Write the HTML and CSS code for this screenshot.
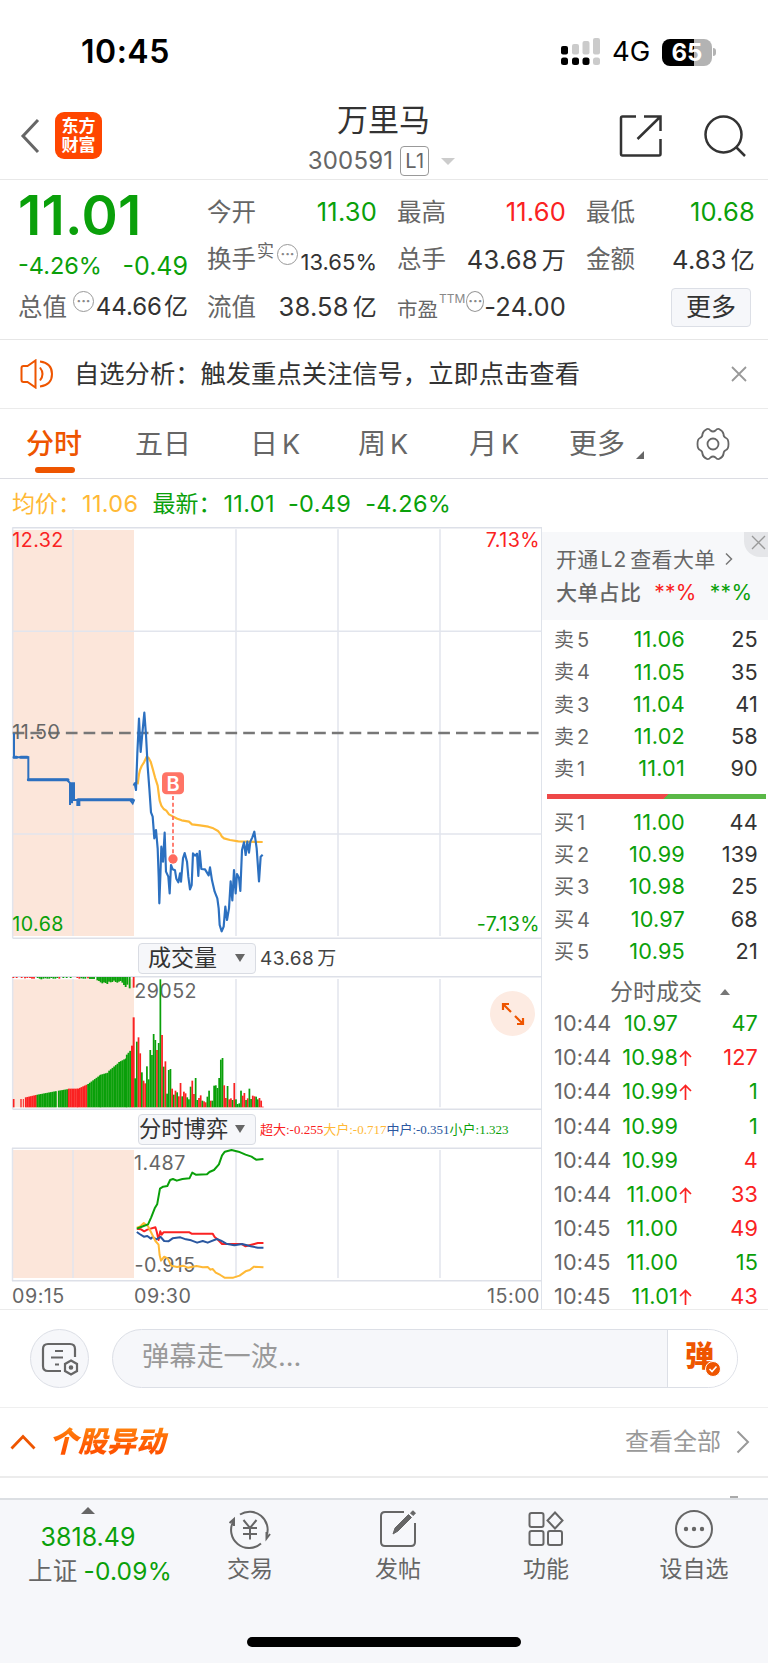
FILE: index.html
```html
<!DOCTYPE html>
<html lang="zh-CN">
<head>
    <meta charset="UTF-8">
    <meta name="viewport" content="width=device-width, initial-scale=1.0">
    <title>万里马 300591</title>
    <link rel="stylesheet" href="styles.css">
</head>
<body>
    <div class="status-bar">
        <span class="status-time">10:45</span>
        <div class="status-right">
            <svg class="signal" viewBox="0 0 40 28">
                <rect x="0" y="8" width="7" height="8.500" rx="2"/>
                <rect x="0" y="19.500" width="7" height="7.500" rx="2.500"/>
                <rect x="11" y="19.500" width="7" height="7.500" rx="2.500"/>
                <rect x="21.500" y="19.500" width="7" height="7.500" rx="2.500"/>
                <g fill="#cbcbcb">
                    <rect x="11" y="6" width="7" height="10.500" rx="2"/>
                    <rect x="21.500" y="3" width="7" height="13.500" rx="2"/>
                    <rect x="32" y="0" width="7" height="16.500" rx="2"/>
                    <rect x="32" y="19.500" width="7" height="7.500" rx="2.500"/>
                </g>
            </svg>
            <span class="network">4G</span>
            <span class="battery">65</span>
            <span class="battery-cap"></span>
        </div>
    </div>

    <header class="header">
        <div class="header-side">
            <svg class="back" viewBox="0 0 20 36"><path d="M18 2L3 18L18 34"/></svg>
            <div class="logo"><span>东方</span><span>财富</span></div>
        </div>
        <div class="header-title">
            <h1>万里马</h1>
            <div class="code"><span>300591</span><span class="level">L1</span><i class="tri-down"></i></div>
        </div>
        <div class="header-side header-actions">
            <svg width="44" height="44" viewBox="0 0 44 44"><path d="M17 2.500H3.500q-1.500 0-1.500 1.500V40q0 1.500 1.500 1.500H40q1.500 0 1.500-1.500V25M25 2.500H41.500V17M41 3L18.500 25"/></svg>
            <svg width="44" height="44" viewBox="0 0 44 44"><circle cx="20.500" cy="20.500" r="18"/><path d="M33 33L42 42"/></svg>
        </div>
    </header>

    <section class="quote">
        <div class="quote-main">
            <div class="price green">11.01</div>
            <div class="change green"><span>-4.26%</span><span class="change-abs">-0.49</span></div>
            <div class="cell"><span class="label">总值</span><span class="dots raised">···</span><b class="val mktcap">44.66<em>亿</em></b></div>
        </div>
        <div class="quote-grid">
            <div class="cell"><span class="label">今开</span><b class="val green">11.30</b></div>
            <div class="cell"><span class="label">最高</span><b class="val red">11.60</b></div>
            <div class="cell"><span class="label">最低</span><b class="val green">10.68</b></div>
            <div class="cell"><span class="label">换手</span><span class="sup">实</span><span class="dots raised">···</span><b class="val small">13.65%</b></div>
            <div class="cell"><span class="label">总手</span><b class="val">43.68<em>万</em></b></div>
            <div class="cell"><span class="label">金额</span><b class="val">4.83<em>亿</em></b></div>
            <div class="cell"><span class="label">流值</span><b class="val">38.58<em>亿</em></b></div>
            <div class="cell"><span class="label narrow">市盈</span><span class="sup ttm">TTM</span><span class="dots raised">···</span><b class="val">-24.00</b></div>
            <div class="cell"><button class="more-btn">更多</button></div>
        </div>
    </section>

    <section class="notice">
        <svg class="speaker" viewBox="0 0 34 30"><path d="M1.500 9q0-2 2-2H7.500L15.500 1.500V28.500L7.500 23H3.500q-2 0-2-2ZM20 8.500Q25 15 20 21.500M20 2.500Q32 4 32 15T20 27.500"/></svg>
        <span class="notice-text">自选分析：触发重点关注信号，立即点击查看</span>
        <svg class="notice-close" viewBox="0 0 16 16"><path d="M1 1L15 15M15 1L1 15"/></svg>
    </section>

    <nav class="tabs">
        <span class="tab active">分时</span>
        <span class="tab">五日</span>
        <span class="tab">日<u>K</u></span>
        <span class="tab">周<u>K</u></span>
        <span class="tab">月<u>K</u></span>
        <span class="tab">更多<i class="tri-corner"></i></span>
        <svg class="gear" viewBox="0 0 34 34"><path d="M11 2Q13 1.500 14.500 3.500Q17 5.500 19.500 3.500Q21 1.500 23 2Q27 4 27.500 7Q27.500 10 30 11Q32.500 12 32.500 17Q32.500 22 30 23Q27.500 24 27.500 27Q27 30 23 32Q21 32.500 19.500 30.500Q17 28.500 14.500 30.500Q13 32.500 11 32Q7 30 6.500 27Q6.500 24 4 23Q1.500 22 1.500 17Q1.500 12 4 11Q6.500 10 6.500 7Q7 4 11 2Z"/><circle cx="17" cy="17" r="5.500"/></svg>
    </nav>

    <div class="ticker">
        <span class="yellow">均价：</span><span class="yellow n1">11.06</span>
        <span class="green n2">最新：</span><span class="green n3">11.01</span>
        <span class="green n4">-0.49</span><span class="green n5">-4.26%</span>
    </div>

    <main class="board">
        <div class="charts">
            <!-- price chart, three units to the pixel -->
            <svg class="chart price-chart" viewBox="0 21 1626 1236">
                <rect class="auction" x="38" y="30" width="364" height="1218"/>
                <path class="grid" d="M38 22V1255M219 28V1248M708 28V1248M1014 28V1248M1320 28V1248M38 334H1625M38 942H1625"/>
                <path class="frame" d="M38 23H1625M38 1255H1625"/>
                <path class="prev-close" d="M38 639H1618"/>
                <text x="37" y="81" fill="#fa2222">12.32</text>
                <text x="37" y="657" fill="#666">11.50</text>
                <text x="37" y="1233" fill="#0aa00a">10.68</text>
                <text x="1620" y="81" text-anchor="end" fill="#fa2222">7.13%</text>
                <text x="1620" y="1233" text-anchor="end" fill="#0aa00a">-7.13%</text>
                <path class="blue auction-line" d="M42 640V712H85V779H200L210 789V855M220 788V838M216 790V850M210 790H222V840H398M232 840V855H238V842M390 840L398 850L403 838"/>
                <path class="blue auction-dots" d="M42 712H50M62 712H82M85 779H204M234 839H398"/>
                <g transform="translate(360 510)" class="lines">
                    <path stroke="#ffb936" d="M53 283L57 253L60 240L65 228L72 217L80 200L86 204L92 215L98 236L105 262L113 287L116 310L119 332L124 347L131 357L139 362L147 373L160 380L172 386L185 391L207 395L216 403L240 406L265 410L280 415L294 423L300 430L305 439L312 445L330 450L355 454L380 455L428 456"/>
                    <path class="blue" d="M41 287L44 280L48 300L52 190L57 86L62 186L67 130L73 68L78 135L83 230L88 295L93 367L98 380L103 445L108 420L113 475L116 560L118 640L121 560L124 470L129 515L134 428L138 545L145 560L149 610L153 525L158 538L165 541L169 566L175 577L180 550L183 575L189 505L194 489L201 515L205 560L210 598L215 585L219 490L225 497L231 491L235 558L239 483L244 537L255 538L266 556L270 532L276 571L284 605L292 625L296 655L299 705L305 724L311 710L316 650L321 690L327 655L332 574L337 631L342 540L347 610L351 552L357 564L361 603L366 480L372 457L377 495L382 455L387 488L391 455L397 442L403 425L410 475L417 574L422 500L428 494"/>
                </g>
                <path class="mark-line" d="M519 828V1010"/>
                <circle cx="519" cy="1017" r="14" fill="#ff6b5e"/>
                <rect x="486" y="757" width="66" height="66" rx="13" fill="#ff7466"/>
                <text class="mark-text" x="519" y="812" text-anchor="middle">B</text>
            </svg>

            <div class="chart-head"><button class="select">成交量<i></i></button><span class="amount">43.68<em>万</em></span></div>

            <div class="volume-wrap">
                <svg class="chart volume-chart" viewBox="0 123 1626 402">
                    <rect class="auction" x="38" y="133" width="364" height="384"/>
                    <path class="grid" d="M38 125V523M219 132V517M708 132V517M1014 132V517M1320 132V517"/>
                    <path class="frame" d="M38 125H1625M38 523H1625"/>
                    <text x="403" y="190" fill="#666">29052</text>
                    <g id="volumeBars"></g>
                </svg>
                <button class="expand"><svg width="24" height="24" viewBox="0 0 24 24"><path d="M10 10L2 2M2 8V2H8M14 14L22 22M22 16V22H16"/></svg></button>
            </div>

            <div class="chart-head"><button class="select tight">分时博弈<i></i></button><span class="legend"><span class="c-red">超大:-0.255</span><span class="yellow">大户:-0.717</span><span class="c-blue">中户:-0.351</span><span class="green">小户:1.323</span></span></div>

            <svg class="chart flow-chart" viewBox="0 1147 542 135">
                <rect class="auction" x="12.500" y="1150" width="121.500" height="128"/>
                <g class="thin">
                    <path class="grid" d="M12.500 1148V1281M73 1150V1278M236 1150V1278M338 1150V1278M440 1150V1278"/>
                    <path class="frame" d="M12 1148.200H541.500M12 1280.800H541.500"/>
                </g>
                <text class="px" x="134" y="1169.500" fill="#666">1.487</text>
                <text class="px" x="134.500" y="1271.500" fill="#666">-0.915</text>
                <g class="flow" transform="translate(0 1110) scale(.3508 .3333)">
                    <path stroke="#fa2222" d="M390 356L402 358L411 364L420 359L443 352L447 366L452 390L457 364L461 374L466 367H540L546 371H606L612 381L620 388L633 402H688L700 409L725 402L735 399H751"/>
                    <path stroke="#2a57a0" d="M390 366L398 372L410 380L420 378L430 386L435 381L446 388L458 381L468 393L480 394L492 385L514 382L530 388L545 391L562 398L578 393L592 398L618 387L630 392L645 401L668 406L690 402L715 409L735 413H751"/>
                    <path stroke="#ffb936" d="M390 353L400 349L410 339L422 349L432 370L443 393L452 404L455 435L459 452L468 440L478 445L488 467L505 471L522 467L535 473L560 468L578 472L592 471L600 479L606 477L615 488L628 495L640 503H665L683 497L700 484L712 480L724 470L751 472"/>
                    <path stroke="#0aa00a" d="M390 356L402 351L422 343L431 322L441 295L448 283L456 236L465 230L477 228L485 210L493 207L504 212L520 207L540 205L548 188L558 194L590 193L597 186L610 180L624 163L633 136L641 125L660 120L680 125L700 134L717 140L730 149L751 147"/>
                </g>
            </svg>
            <div class="axis"><span>09:15</span><span class="axis-open">09:30</span><span class="axis-close">15:00</span></div>
        </div>

        <aside class="side">
            <div class="promo">
                <svg class="promo-close" viewBox="0 0 24 25"><path d="M8 4L21 17M21 4L8 17"/></svg>
                <div class="promo-link">开通<u>L2</u>查看大单<svg width="8" height="14" viewBox="0 0 8 14"><path d="M1 1.500L6.500 7L1 12.500"/></svg></div>
                <div class="promo-ratio">大单占比<span class="red">**%</span><span class="green">**%</span></div>
            </div>
            <div class="book">
                <div class="order"><span>卖5</span><b>11.06</b><em>25</em></div>
                <div class="order"><span>卖4</span><b>11.05</b><em>35</em></div>
                <div class="order"><span>卖3</span><b>11.04</b><em>41</em></div>
                <div class="order"><span>卖2</span><b>11.02</b><em>58</em></div>
                <div class="order"><span>卖1</span><b>11.01</b><em>90</em></div>
            </div>
            <div class="ratio-bar"></div>
            <div class="book">
                <div class="order"><span>买1</span><b>11.00</b><em>44</em></div>
                <div class="order"><span>买2</span><b>10.99</b><em>139</em></div>
                <div class="order"><span>买3</span><b>10.98</b><em>25</em></div>
                <div class="order"><span>买4</span><b>10.97</b><em>68</em></div>
                <div class="order"><span>买5</span><b>10.95</b><em>21</em></div>
            </div>
            <div class="deals-title">分时成交<i></i></div>
            <div class="deals">
                <div class="deal"><span>10:44</span><b>10.97</b><em class="green">47</em></div>
                <div class="deal"><span>10:44</span><b>10.98</b><svg class="up" viewBox="0 0 13 16"><path d="M6.500 16V1.500M1 7L6.500 1.500L12 7"/></svg><em class="red">127</em></div>
                <div class="deal"><span>10:44</span><b>10.99</b><svg class="up" viewBox="0 0 13 16"><path d="M6.500 16V1.500M1 7L6.500 1.500L12 7"/></svg><em class="green">1</em></div>
                <div class="deal"><span>10:44</span><b>10.99</b><em class="green">1</em></div>
                <div class="deal"><span>10:44</span><b>10.99</b><em class="red">4</em></div>
                <div class="deal"><span>10:44</span><b>11.00</b><svg class="up" viewBox="0 0 13 16"><path d="M6.500 16V1.500M1 7L6.500 1.500L12 7"/></svg><em class="red">33</em></div>
                <div class="deal"><span>10:45</span><b>11.00</b><em class="red">49</em></div>
                <div class="deal"><span>10:45</span><b>11.00</b><em class="green">15</em></div>
                <div class="deal"><span>10:45</span><b>11.01</b><svg class="up" viewBox="0 0 13 16"><path d="M6.500 16V1.500M1 7L6.500 1.500L12 7"/></svg><em class="red">43</em></div>
            </div>
        </aside>
    </main>

    <section class="comment">
        <button class="comment-set"><svg width="38" height="34" viewBox="0 0 38 34"><path d="M20 29H7q-5 0-5-5V7q0-5 5-5H29q5 0 5 5V15M14 9H22M10 15.500H22M14 22.500H18M30 18.500L36 22V29L30 32.500L24 29V22Z"/><circle cx="30" cy="25.500" r="1.200"/></svg></button>
        <div class="comment-box">
            <span class="placeholder">弹幕走一波...</span>
            <div class="danmu">弹<svg width="16" height="16" viewBox="0 0 16 16"><circle cx="8" cy="8" r="7.500" fill="#ee5500" stroke="#fff" stroke-width="1"/><path d="M4.500 8L7 10.500L11.500 5.500" fill="none" stroke="#fff" stroke-width="1.600"/></svg></div>
        </div>
    </section>

    <section class="moves">
        <svg class="moves-arrow" viewBox="0 0 26 16"><path d="M1.500 14.500L13 2.500L24.500 14.500"/></svg>
        <h2>个股异动</h2>
        <span class="view-all">查看全部</span>
        <svg class="moves-more" viewBox="0 0 14 24"><path d="M1.500 1.500L12 12L1.500 22.500"/></svg>
    </section>
    <div class="peek"><i></i></div>

    <footer class="bottom-nav">
        <div class="index">
            <i class="tri-up"></i>
            <span class="green index-val">3818.49</span>
            <span class="index-row">上证<span class="green">-0.09%</span></span>
        </div>
        <div class="nav-item">
            <svg viewBox="0 0 44 40"><path d="M12 5.500A18 18 0 0 1 38.500 27M42 25L38.500 29.500V23M33 34.500A18 18 0 0 1 5.500 12M1.500 14L6 10V17M15.500 11L22 19L28.500 11M22 19V30.500M15 19H29M15 25H29"/></svg>
            <span>交易</span>
        </div>
        <div class="nav-item">
            <svg viewBox="0 0 44 40"><path d="M28 3H9q-4 0-4 4V33q0 4 4 4H35q4 0 4-4V14"/><path d="M17 25L19 19L32.500 5.500L35.500 8.500L22 22ZM34.500 4L37 1.800L39.500 4.200L37 6.500Z" fill="#666" stroke-width="1"/></svg>
            <span>发帖</span>
        </div>
        <div class="nav-item">
            <svg viewBox="0 0 44 40"><rect x="5.500" y="4" width="14" height="14" rx="2"/><rect x="5.500" y="22" width="14" height="14" rx="2"/><rect x="24" y="22" width="14" height="14" rx="2"/><path d="M31 3.500L38.500 11.500L31 19.500L23.500 11.500Z"/></svg>
            <span>功能</span>
        </div>
        <div class="nav-item">
            <svg viewBox="0 0 44 40"><circle cx="22" cy="20" r="18"/><g fill="#666" stroke="none"><circle cx="14" cy="20" r="2.200"/><circle cx="22" cy="20" r="2.200"/><circle cx="30" cy="20" r="2.200"/></g></svg>
            <span>设自选</span>
        </div>
        <div class="home-indicator"></div>
    </footer>

    <script src="chart.js"></script>
</body>
</html>
```
FILE: styles.css
```css
* {
    margin: 0;
    padding: 0;
    box-sizing: border-box;
}

body {
    width: 768px;
    height: 1663px;
    overflow: hidden;
    background: #fff;
    color: #333;
    font-family: Inter, 'Noto Sans CJK SC', sans-serif;
    font-size: 24px;
    line-height: 1;
}

b, em, i, u {
    font-weight: 400;
    font-style: normal;
    text-decoration: none;
}

button {
    font: inherit;
    color: inherit;
    border: 0;
    background: none;
}

svg {
    display: block;
    flex: none;
    fill: none;
}

.green { color: #0aa00a; }
.red { color: #fa2222; }
.yellow { color: #ffb936; }

/* status bar */
.status-bar {
    height: 104px;
    padding: 0 52px 0 81px;
    display: flex;
    justify-content: space-between;
    align-items: center;
    color: #000;
}

.status-time {
    font-size: 32px;
    font-weight: 600;
    letter-spacing: 0.500px;
}

.status-right {
    display: flex;
    align-items: center;
}

.signal {
    width: 40px;
    height: 28px;
    fill: #000;
}

.network {
    margin-left: 11px;
    width: 50px;
    font-size: 27.500px;
}

.battery {
    width: 50px;
    height: 27px;
    border-radius: 8px;
    background: linear-gradient(90deg, #000 65%, #b3b3b3 65%);
    color: #fff;
    font-size: 24px;
    font-weight: 700;
    line-height: 27px;
    text-align: center;
}

.battery-cap {
    width: 3px;
    height: 8px;
    margin-left: 1px;
    border-radius: 0 3px 3px 0;
    background: #b3b3b3;
}

/* header */
.header {
    height: 76px;
    padding: 0 21px 0 20px;
    display: flex;
    border-bottom: 1px solid #e8e8e8;
}

.header-side {
    width: 127px;
    height: 63px;
    display: flex;
    align-items: center;
}

.back {
    width: 20px;
    height: 36px;
    stroke: #666;
    stroke-width: 3;
}

.logo {
    width: 47px;
    height: 47px;
    margin-left: 15px;
    border-radius: 9px;
    background: #ff4600;
    color: #fff;
    font-size: 17px;
    font-weight: 700;
    line-height: 19px;
    display: flex;
    flex-direction: column;
    align-items: center;
    justify-content: center;
}

.header-title {
    flex: 1;
    display: flex;
    flex-direction: column;
    align-items: center;
}

h1 {
    margin-top: -1px;
    font-size: 31px;
    font-weight: 400;
    line-height: 34px;
}

.code {
    height: 30px;
    margin: 9px 4px 0 0;
    display: flex;
    align-items: center;
    font-size: 24px;
    letter-spacing: 0.200px;
    color: #666;
}

.level {
    width: 29px;
    height: 30px;
    margin-left: 7px;
    border: 1.500px solid #999;
    border-radius: 4px;
    font-size: 20px;
    line-height: 28px;
    text-align: center;
}

.tri-down {
    margin-left: 12px;
    border: 7px solid transparent;
    border-top-color: #ccc;
    border-bottom: 0;
}

.header-actions {
    justify-content: flex-end;
    gap: 40px;
    stroke: #333;
    stroke-width: 2.500;
}

/* quote */
.quote {
    height: 160px;
    display: flex;
    border-bottom: 1px solid #e6e6e6;
}

.quote-main {
    width: 188px;
    padding-left: 18px;
}

.price {
    height: 57px;
    padding-top: 8px;
    font-size: 55px;
    font-weight: 600;
    line-height: 55px;
    letter-spacing: 0.300px;
}

.change {
    height: 46px;
    display: flex;
    align-items: center;
    justify-content: space-between;
    padding-top: 12px;
    font-size: 23.500px;
}

.change-abs {
    font-size: 25px;
}

.quote-main .cell {
    height: 48px;
}

.quote-grid {
    padding: 8px 0 0 19px;
    display: grid;
    grid-template-columns: 170px 169px 169px;
    grid-template-rows: 48px 47px 48px;
    column-gap: 20px;
}

.cell {
    display: flex;
    align-items: center;
}

.label {
    color: #666;
    font-size: 24.500px;
    white-space: nowrap;
}

.narrow {
    font-size: 20.500px;
    padding-top: 6px;
}

.sup {
    color: #666;
    font-size: 17px;
    margin: -16px 3px 0 1px;
}

.ttm {
    font-size: 12px;
    margin-right: 1px;
    color: #888;
}

.dots {
    width: 21px;
    height: 21px;
    border: 1.800px solid #999;
    border-radius: 50%;
    color: #888;
    font-size: 14px;
    font-weight: 700;
    line-height: 17px;
    text-align: center;
}

.raised {
    margin-top: -11px;
}

.quote-main .dots {
    margin-left: 6px;
}

.val {
    margin-left: auto;
    font-size: 25.500px;
    letter-spacing: 0.200px;
    white-space: nowrap;
}

.val em {
    margin-left: 4px;
    font-size: 24px;
}

.val.small {
    font-size: 22px;
    letter-spacing: 0;
    padding-top: 4px;
}

.val.mktcap {
    font-size: 24px;
    letter-spacing: 0;
}

.mktcap em {
    margin-left: 2px;
}

.more-btn {
    width: 80px;
    height: 39px;
    margin-left: 85px;
    border: 1px solid #dcdfe6;
    border-radius: 4px;
    background: #f6f7fa;
    font-size: 25px;
    line-height: 34px;
}

/* notice */
.notice {
    height: 69px;
    padding: 0 21px 1px 20px;
    display: flex;
    align-items: center;
    border-bottom: 1.500px solid #ebebeb;
}

.speaker {
    width: 34px;
    height: 30px;
    stroke: #ee5500;
    stroke-width: 2;
}

.notice-text {
    margin-left: 20px;
    font-size: 25.300px;
}

.notice-close {
    width: 16px;
    height: 16px;
    margin-left: auto;
    stroke: #999;
    stroke-width: 1.800;
}

/* period tabs */
.tabs {
    height: 70px;
    padding: 0 38px 0 26px;
    display: grid;
    grid-template-columns: 109px 115px 108px 111px 100px 127px 34px;
    align-items: center;
    border-bottom: 1.500px solid #dcdde3;
    color: #666;
    font-size: 28px;
}

.tab {
    position: relative;
    white-space: nowrap;
}

.tab u {
    margin-left: 4px;
    font-size: 27px;
}

.tab.active {
    color: #ee5500;
    font-weight: 500;
}

.tab.active::after {
    content: '';
    position: absolute;
    left: 9px;
    top: 37px;
    width: 40px;
    height: 6px;
    border-radius: 3px;
    background: #ee5500;
}

.tri-corner {
    position: relative;
    top: 5px;
    display: inline-block;
    margin-left: 11px;
    border-left: 8px solid transparent;
    border-bottom: 8px solid #666;
}

.gear {
    width: 34px;
    height: 34px;
    stroke: #666;
    stroke-width: 1.800;
}

.ticker {
    height: 48px;
    padding: 2px 0 0 12px;
    display: flex;
    align-items: center;
    font-size: 23px;
}

.n1, .n3, .n4, .n5 {
    font-size: 23.500px;
    letter-spacing: 0.350px;
}

.n1 { margin: 0 14px 0 1px; }
.n3 { margin: 0 13px 0 2px; }
.n4 { margin-right: 14px; }

/* charts */
.board {
    height: 783px;
    display: flex;
    border-bottom: 1.500px solid #ebebeb;
}

.charts {
    width: 542px;
    border-right: 1px solid #dfe3ea;
}

.chart {
    width: 542px;
    font-size: 59px;
    letter-spacing: 1.300px;
}

.price-chart { height: 412px; }
.volume-chart { height: 134px; }
.flow-chart { height: 135px; }

.auction { fill: #fce6da; }

.grid {
    stroke: #e2e5ed;
    stroke-width: 4.500;
}

.frame {
    stroke: #dde0e8;
    stroke-width: 4.500;
}

.thin path {
    stroke-width: 1.500;
}

.px {
    font-size: 19.700px;
    letter-spacing: 0.400px;
}

.prev-close {
    stroke: #777;
    stroke-width: 7.500;
    stroke-dasharray: 35 18.200;
}

.blue { stroke: #2c70c0; }

.auction-line {
    stroke-width: 6;
}

.auction-dots {
    stroke-width: 9;
    stroke-linecap: round;
}

.lines {
    stroke-width: 6.500;
    stroke-linejoin: round;
}

.mark-line {
    stroke: #ff7466;
    stroke-width: 5.500;
    stroke-dasharray: 12 8;
}

.mark-text {
    fill: #fff;
    font-size: 60px;
    font-weight: 600;
    letter-spacing: 0;
}

.flow path {
    stroke-width: 2;
    stroke-linejoin: round;
    vector-effect: non-scaling-stroke;
}

.chart-head {
    height: 37px;
    padding: 1px 0 0 138px;
    display: flex;
    align-items: center;
}

.select {
    width: 118px;
    height: 31px;
    padding: 0 10px 0 9px;
    display: flex;
    align-items: center;
    justify-content: space-between;
    border: 1px solid #d9dce3;
    border-radius: 4px;
    background: #f6f7fa;
    font-size: 23px;
}

.select i {
    border: 5px solid transparent;
    border-top: 8px solid #666;
    border-bottom: 0;
}

.select.tight {
    padding-left: 0;
    font-size: 22.300px;
}

.amount {
    margin-left: 4px;
    font-size: 19px;
    letter-spacing: 0.400px;
    color: #444;
}

.amount em {
    margin-left: 3px;
}

.legend {
    margin-left: 4px;
    font-family: 'Liberation Serif', 'Noto Sans CJK SC', serif;
    font-size: 13px;
    white-space: nowrap;
}

.c-red { color: #fa2222; }
.c-blue { color: #2a57a0; }

.volume-wrap {
    position: relative;
}

.expand {
    position: absolute;
    left: 490px;
    top: 15px;
    width: 45px;
    height: 45px;
    border-radius: 50%;
    background: #fdebe2;
    display: flex;
    align-items: center;
    justify-content: center;
    stroke: #ee5500;
    stroke-width: 2.200;
}

.axis {
    padding: 5px 1px 0 12px;
    display: grid;
    grid-template-columns: 122px 1fr auto;
    font-size: 19.700px;
    letter-spacing: 0.500px;
    color: #666;
}

/* order book */
.side {
    width: 226px;
    padding-top: 5px;
}

.promo {
    position: relative;
    height: 88px;
    padding: 16px 0 0 14px;
    background: #f7f8fa;
    color: #666;
    font-size: 21px;
    letter-spacing: 0.300px;
}

.promo-close {
    position: absolute;
    right: 0;
    top: 0;
    width: 24px;
    height: 25px;
    border-bottom-left-radius: 16px;
    background: #e5e6e9;
    stroke: #999;
    stroke-width: 1.300;
}

.promo-link {
    height: 22px;
    display: flex;
    align-items: center;
}

.promo-link u {
    margin: 0 3px 0 2px;
    letter-spacing: 1px;
}

.promo-link svg {
    margin-left: 9px;
    stroke: #777;
    stroke-width: 1.500;
}

.promo-ratio {
    height: 22px;
    margin-top: 11px;
    display: flex;
    align-items: center;
    font-weight: 500;
}

.promo-ratio span {
    margin-left: 13px;
    font-weight: 400;
}

.book {
    padding: 4px 10px 0 13px;
}

.order {
    height: 32.300px;
    display: flex;
    align-items: center;
    font-size: 21.700px;
    letter-spacing: 0.200px;
}

.order span {
    width: 55px;
    margin-left: -1px;
    color: #666;
    font-size: 20px;
    letter-spacing: 3px;
}

.order b {
    width: 76px;
    text-align: right;
    color: #0aa00a;
}

.order em {
    flex: 1;
    text-align: right;
}

.ratio-bar {
    height: 5px;
    margin: 9px 2px 3px 5px;
    background: linear-gradient(135deg, #ee4848 0, #ee4848 54.300%, #5ab847 54.300%);
}

.deals-title {
    height: 39px;
    padding: 10px 0 0 68px;
    display: flex;
    align-items: center;
    font-size: 23px;
    color: #666;
}

.deals-title i {
    margin-left: 18px;
    border: 5.500px solid transparent;
    border-bottom: 6px solid #777;
    border-top: 0;
}

.deal {
    height: 34.130px;
    padding: 0 10px 0 12px;
    display: flex;
    align-items: center;
    font-size: 21.700px;
    letter-spacing: 0.150px;
}

.deal span {
    width: 58px;
    color: #666;
}

.deal b {
    width: 66px;
    text-align: right;
    color: #0aa00a;
}

.deal em {
    margin-left: auto;
}

.up {
    width: 13px;
    height: 16px;
    margin-left: 1px;
    stroke: #fa2222;
    stroke-width: 1.700;
}

/* comment bar */
.comment {
    height: 98px;
    padding: 0 30px;
    display: flex;
    align-items: center;
    border-bottom: 1px solid #efefef;
}

.comment-set {
    width: 59px;
    height: 59px;
    border: 1px solid #dcdfe6;
    border-radius: 50%;
    background: #f6f7fa;
    display: flex;
    align-items: center;
    justify-content: center;
    stroke: #666;
    stroke-width: 2.200;
}

.comment-box {
    width: 626px;
    height: 59px;
    margin-left: 23px;
    border: 1px solid #dcdfe6;
    border-radius: 30px;
    background: #f6f7fa;
    overflow: hidden;
    display: flex;
    align-items: center;
}

.placeholder {
    flex: 1;
    padding: 0 0 4px 29px;
    font-size: 27.200px;
    color: #999;
}

.danmu {
    position: relative;
    width: 70px;
    height: 59px;
    padding-left: 17px;
    border-left: 1px solid #dcdfe6;
    background: #fff;
    color: #ee5500;
    font-size: 29px;
    font-weight: 900;
    line-height: 56px;
}

.danmu svg {
    position: absolute;
    left: 37px;
    top: 32px;
}

/* stock moves */
.moves {
    height: 70px;
    padding: 0 18px 0 10px;
    display: flex;
    align-items: center;
    border-bottom: 2px solid #ececec;
}

.moves-arrow {
    width: 26px;
    height: 16px;
    stroke: #ee5500;
    stroke-width: 2.800;
}

h2 {
    margin-left: 13px;
    padding-right: 4px;
    font-size: 29px;
    font-weight: 900;
    font-style: italic;
    line-height: 36px;
    background: linear-gradient(#ff8a10, #ff5400 70%);
    -webkit-background-clip: text;
    background-clip: text;
    color: transparent;
}

.view-all {
    margin-left: auto;
    font-size: 24px;
    color: #999;
}

.moves-more {
    width: 14px;
    height: 24px;
    margin-left: 15px;
    stroke: #999;
    stroke-width: 2;
}

.peek {
    height: 20px;
    padding: 18px 30px 0 0;
    display: flex;
    justify-content: flex-end;
}

.peek i {
    width: 8px;
    height: 2px;
    background: #aaa;
}

/* bottom nav */
.bottom-nav {
    position: relative;
    height: 166px;
    display: flex;
    border-top: 2px solid #dcdfe3;
    background: #f6f7fa;
}

.index {
    width: 176px;
    padding-top: 7px;
    display: flex;
    flex-direction: column;
    align-items: center;
}

.tri-up {
    border: 7px solid transparent;
    border-bottom: 7px solid #666;
    border-top: 0;
}

.index-val {
    margin-top: 11px;
    font-size: 25px;
}

.index-row {
    margin: 9px 0 0 24px;
    display: flex;
    align-items: center;
    gap: 6px;
    font-size: 24.500px;
    letter-spacing: 0.200px;
    color: #666;
    white-space: nowrap;
}

.nav-item {
    width: 148px;
    padding-top: 9px;
    display: flex;
    flex-direction: column;
    align-items: center;
    font-size: 23px;
    color: #666;
}

.nav-item svg {
    width: 44px;
    height: 40px;
    margin-bottom: 9px;
    stroke: #666;
    stroke-width: 2;
}

.home-indicator {
    position: absolute;
    left: 247px;
    bottom: 17px;
    width: 274px;
    height: 10px;
    border-radius: 5px;
    background: #000;
}
```
FILE: chart.js
```js
const RED = '#fa2222';
const GREEN = '#0aa00a';
const BASE = 517;
const group = document.getElementById('volumeBars');

function bar(x, y, height, color, width) {
    const rect = document.createElementNS('http://www.w3.org/2000/svg', 'rect');
    rect.setAttribute('x', x - width / 2);
    rect.setAttribute('y', y);
    rect.setAttribute('width', width);
    rect.setAttribute('height', height);
    rect.setAttribute('fill', color);
    group.appendChild(rect);
}

// call auction: x, height, color for each run, interpolated in between
const auction = [
    [75, 30, 110, 38, RED], [110, 38, 168, 49, GREEN], [174, 50, 204, 55, GREEN],
    [204, 56, 232, 56, RED], [232, 56, 262, 70, RED], [262, 70, 300, 98, GREEN],
    [300, 98, 325, 105, GREEN], [325, 110, 355, 135, GREEN], [355, 136, 378, 148, GREEN],
    [378, 158, 392, 174, GREEN]
];
auction.forEach(([x1, h1, x2, h2, color]) => {
    for (let x = x1; x < x2; x += 5) {
        const h = h1 + (h2 - h1) * (x - x1) / (x2 - x1);
        bar(x + 2.5, BASE - h, h, color, 5.6);
    }
});
bar(41, BASE - 25, 25, RED, 5);
bar(63, BASE - 25, 25, RED, 4);
bar(70, BASE - 25, 25, RED, 3);
bar(396, BASE - 185, 185, RED, 6);
bar(401, BASE - 270, 270, RED, 6);

// unmatched volume hangs from the top edge
[[40, 3, RED], [50, 3, RED], [65, 3, RED], [75, 4, RED], [82, 3, RED], [90, 3, RED], [96, 5, RED], [102, 5, RED], [113, 3, GREEN],
 [119, 5, GREEN], [124, 7, GREEN], [130, 5, GREEN], [136, 4, GREEN], [142, 5, GREEN], [148, 5, GREEN],
 [154, 3, GREEN], [160, 5, GREEN], [166, 5, GREEN], [172, 3, GREEN], [178, 5, RED], [190, 3, GREEN],
 [200, 3, GREEN], [212, 3, GREEN], [232, 3, RED], [238, 5, RED], [244, 4, GREEN], [250, 5, GREEN], [256, 5, GREEN],
 [264, 4, RED], [270, 6, GREEN], [276, 6, GREEN], [282, 6, GREEN], [292, 10, GREEN], [297, 12, GREEN],
 [302, 16, GREEN], [307, 19, GREEN], [312, 16, GREEN], [317, 18, GREEN], [322, 21, GREEN], [327, 14, GREEN],
 [332, 16, GREEN], [337, 15, GREEN], [342, 11, GREEN], [347, 15, GREEN], [352, 17, GREEN], [357, 14, GREEN],
 [362, 12, GREEN], [367, 17, GREEN], [372, 24, GREEN], [377, 30, GREEN], [382, 23, GREEN], [389, 34, GREEN],
 [401, 32, RED]].forEach(([x, h, color]) => bar(x, 126, h, color, 5.5));

// one bar per minute from 09:30; negative values are falling minutes
const minutes = [
    -87, -197, 210, 162, -105, 80, 72, -123, -84, -172, -157, -220, -202, 172, -193, -384,
    217, -122, 138, -41, -112, -115, 56, -38, 50, -45, 33, 73, -33, 47, 42, -30,
    -24, -62, 80, 40, -88, -22, 28, 36, -20, 18, 15, -32, -50, 20, -20, -65,
    -66, -58, -88, -143, -148, 66, 28, -64, 24, 27, -22, 73, -24, -10, -12, -50,
    35, 43, -22, 27, -56, -25, 35, 33, -32, -24, 28, 20, 2
];
minutes.forEach((v, i) => {
    bar(405.5 + i * 5.04, BASE - Math.abs(v), Math.abs(v), v > 0 ? RED : GREEN, 5.2);
});
```
